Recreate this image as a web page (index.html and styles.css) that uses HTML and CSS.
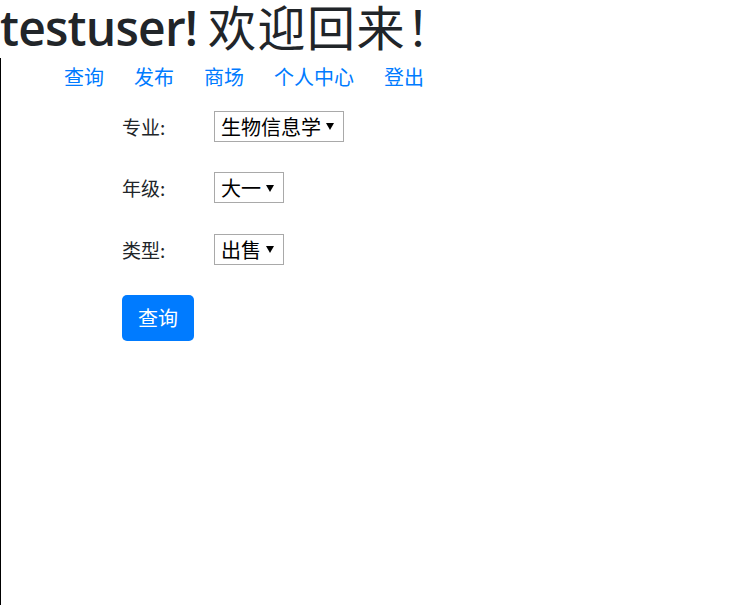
FILE: index.html
```html
<!DOCTYPE html>
<html lang="zh">
<head>
<meta charset="utf-8">
<title>欢迎回来</title>
<link rel="stylesheet" href="styles.css">
</head>
<body>
<h1 class="title"><span class="name">testuser!</span> <span class="greet">欢迎回来！</span></h1>
<div class="page">
  <nav class="nav">
    <a class="nav-link" href="#">查询</a>
    <a class="nav-link" href="#">发布</a>
    <a class="nav-link" href="#">商场</a>
    <a class="nav-link" href="#">个人中心</a>
    <a class="nav-link" href="#">登出</a>
  </nav>
  <form class="search">
    <div class="row">
      <label class="label">专业:</label>
      <span class="select-wrap"><select class="select"><option>生物信息学</option></select></span>
    </div>
    <div class="row">
      <label class="label">年级:</label>
      <span class="select-wrap"><select class="select"><option>大一</option></select></span>
    </div>
    <div class="row">
      <label class="label">类型:</label>
      <span class="select-wrap"><select class="select"><option>出售</option></select></span>
    </div>
    <div class="row">
      <button class="btn" type="button">查询</button>
    </div>
  </form>
</div>
</body>
</html>
```

FILE: styles.css
```css
html, body {
  margin: 0;
  padding: 0;
  background: #fff;
}
body {
  font-family: "Open Sans", "Noto Sans CJK SC", sans-serif;
  color: #212529;
}
.title {
  margin: 0;
  height: 57.6px;
  font-size: 48px;
  line-height: 50px;
  font-weight: 400;
  color: #212529;
  font-family: "Noto Sans CJK SC", sans-serif;
  white-space: nowrap;
}
.name {
  font-family: "Open Sans", "Noto Sans CJK SC", sans-serif;
  font-weight: 600;
  letter-spacing: -0.8px;
}
.greet {
  letter-spacing: 1.5px;
}
.page {
  border-left: 1px solid #000;
  min-height: calc(100vh - 57.6px);
  box-sizing: border-box;
}
.nav {
  display: flex;
  padding-left: 48px;
}
.nav-link {
  font-family: "Noto Sans CJK SC", sans-serif;
  font-size: 20px;
  line-height: 30px;
  padding: 4px 15px 4px;
  color: #007bff;
  text-decoration: none;
}
.search {
  display: flex;
  flex-direction: column;
  gap: 30.5px;
  padding-left: 121px;
  margin-top: 15.4px;
}
.row {
  display: flex;
  align-items: center;
  height: 31px;
}
.row:last-child {
  height: auto;
}
.label {
  width: 92px;
  font-family: "Noto Sans CJK SC", sans-serif;
  font-size: 19px;
  line-height: 31px;
  color: #212529;
}
.select-wrap {
  position: relative;
  display: inline-block;
}
.select-wrap::after {
  content: "";
  position: absolute;
  right: 10px;
  top: 50%;
  margin-top: -3px;
  border-left: 4px solid transparent;
  border-right: 4px solid transparent;
  border-top: 7px solid #000;
  pointer-events: none;
}
.select {
  -webkit-appearance: none;
  appearance: none;
  box-sizing: border-box;
  height: 31px;
  margin: 0;
  padding: 0 22px 0 6px;
  border: 1px solid #a9a9a9;
  border-radius: 0;
  background: #fff;
  color: #000;
  font-family: "Noto Sans CJK SC", sans-serif;
  font-size: 20px;
  line-height: 29px;
}
.btn {
  font-family: "Noto Sans CJK SC", sans-serif;
  font-size: 20px;
  line-height: 30px;
  padding: 8px 16px;
  border: 0;
  border-radius: 5px;
  background: #007bff;
  color: #fff;
  cursor: pointer;
}
```
